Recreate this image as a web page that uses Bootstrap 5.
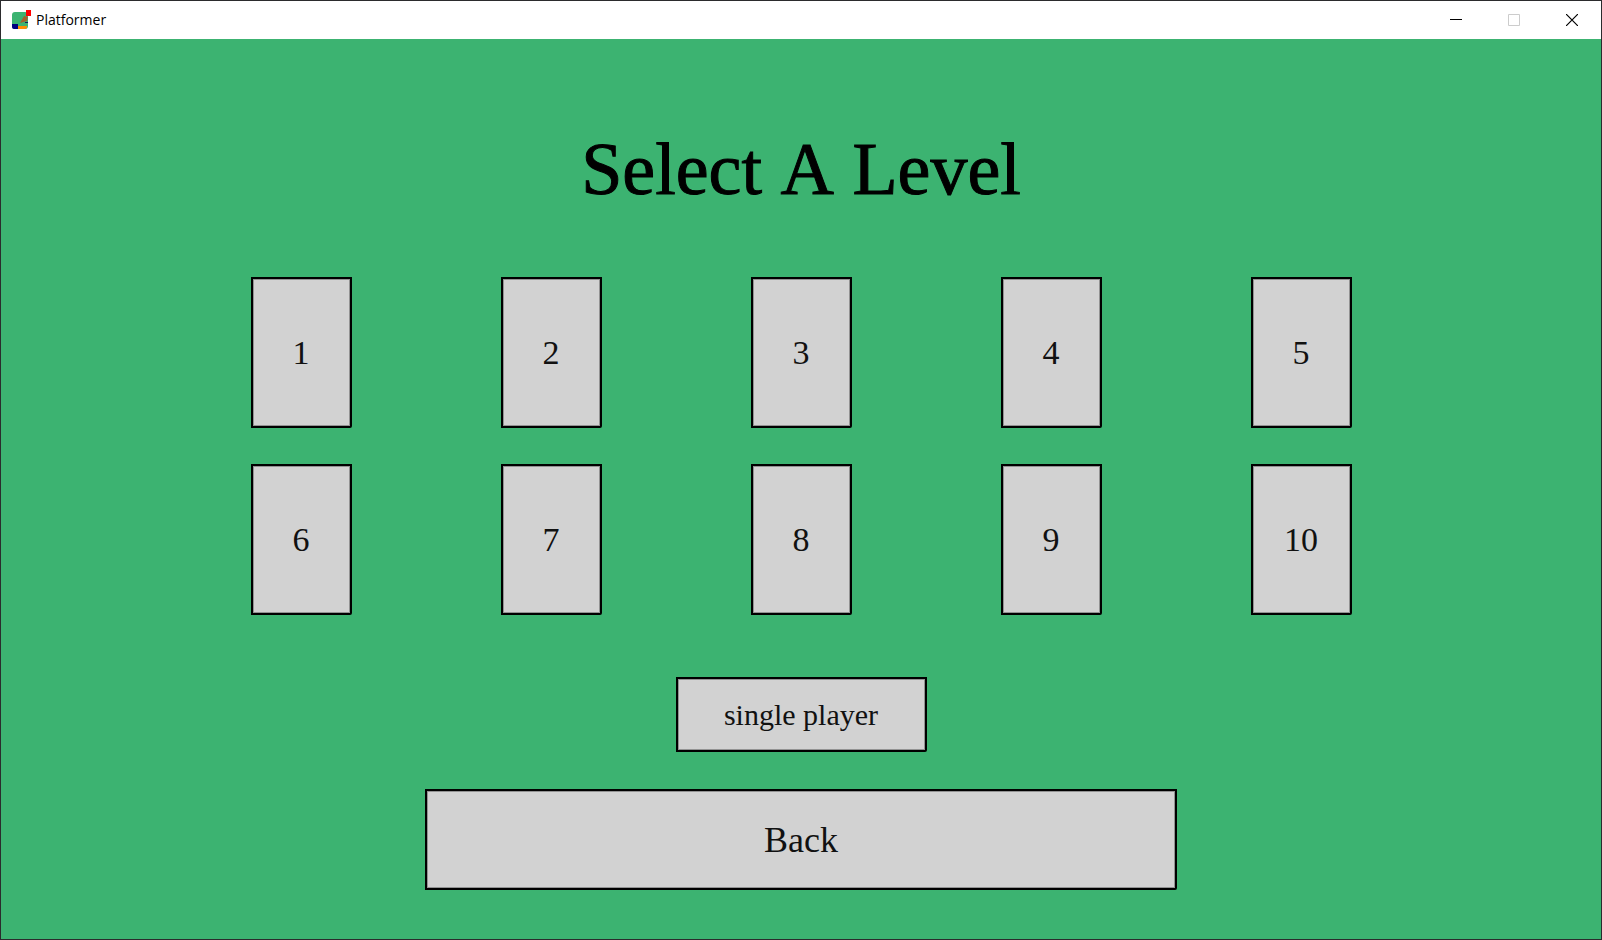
<!DOCTYPE html>
<html lang="en">
<head>
<meta charset="utf-8">
<meta name="viewport" content="width=device-width, initial-scale=1">
<title>Platformer</title>
<link href="https://cdn.jsdelivr.net/npm/bootstrap@5.3.0/dist/css/bootstrap.min.css" rel="stylesheet">
<style>
  .app-window { border: 1px solid #2b2b2d; background: #3cb371; }
  .title-bar { height: 38px; padding-left: 7px; font: 14px/20px "Open Sans", "Noto Sans", sans-serif; color: #000; }
  .caption-btn { width: 58px; height: 38px; border: 0; background: none; color: #000; }
  .caption-btn:hover { background: #e5e5e5; }
  .caption-btn:disabled { color: #ccc; }
  .game-screen { font-family: "Liberation Serif", serif; color: #000; padding: 84px 0 49px; }
  .screen-title { font-size: 74px; line-height: 92px; font-kerning: none; -webkit-text-stroke: 1px #000; }
  .level-grid { display: grid; grid-template-columns: repeat(5, 1fr); row-gap: 36px; width: 78.125%; margin-top: 62px; }
  .game-btn {
    padding: 0; border: 2px solid #000; border-bottom-right-radius: 2px;
    background: #d2d2d2; color: #111;
    box-shadow: inset 0 0 0 1px rgba(0, 0, 0, .3);
    font-size: 36px; line-height: 40px;
  }
  .game-btn:hover { background: #c4c4c4; }
  .level-btn { width: 101px; height: 151px; font-size: 34px; }
  .mode-btn { width: 251px; height: 75px; margin-top: 62px; font-size: 30px; }
  .back-btn { width: 47%; height: 101px; margin-top: 37px; }
</style>
</head>
<body>
<div class="app-window min-vh-100 d-flex flex-column">
  <header class="title-bar bg-white d-flex align-items-center">
    <svg class="me-1" width="24" height="24" viewBox="0 0 24 24" aria-hidden="true">
      <rect x="4" y="4" width="16" height="17" rx="3" fill="#3cb371"/>
      <path d="M12 15l4-7 4 1-1 4z" fill="#a0622d"/>
      <path d="M17 14.500h3" stroke="#102060"/>
      <path d="M10 18h9v1a2 2 0 0 1-2 2h-7z" fill="#ff8c00"/>
      <path d="M4 16h6v5H6a2 2 0 0 1-2-2z" fill="#000080"/>
      <rect x="18" y="2" width="5" height="6" fill="#f00"/>
    </svg>
    <span>Platformer</span>
    <div class="ms-auto d-flex">
      <button type="button" class="caption-btn" aria-label="Minimize"><svg class="d-block mx-auto" width="12" height="12" viewBox="0 0 12 12"><path d="M0 5.500h12" stroke="currentColor"/></svg></button>
      <button type="button" class="caption-btn" aria-label="Maximize" disabled><svg class="d-block mx-auto" width="12" height="12" viewBox="0 0 12 12"><path d="M.5.5h11v11H.5z" fill="none" stroke="currentColor"/></svg></button>
      <button type="button" class="caption-btn" aria-label="Close"><svg class="d-block mx-auto" width="12" height="12" viewBox="0 0 12 12"><path d="m0 0 12 12M12 0 0 12" stroke="currentColor" stroke-width="1.2"/></svg></button>
    </div>
  </header>
  <main class="game-screen flex-grow-1 d-flex flex-column align-items-center">
    <h1 class="screen-title fw-normal text-center mb-0">Select A Level</h1>
    <div class="level-grid">
      <div class="text-center"><button type="button" class="game-btn level-btn">1</button></div>
      <div class="text-center"><button type="button" class="game-btn level-btn">2</button></div>
      <div class="text-center"><button type="button" class="game-btn level-btn">3</button></div>
      <div class="text-center"><button type="button" class="game-btn level-btn">4</button></div>
      <div class="text-center"><button type="button" class="game-btn level-btn">5</button></div>
      <div class="text-center"><button type="button" class="game-btn level-btn">6</button></div>
      <div class="text-center"><button type="button" class="game-btn level-btn">7</button></div>
      <div class="text-center"><button type="button" class="game-btn level-btn">8</button></div>
      <div class="text-center"><button type="button" class="game-btn level-btn">9</button></div>
      <div class="text-center"><button type="button" class="game-btn level-btn">10</button></div>
    </div>
    <button type="button" class="game-btn mode-btn">single player</button>
    <button type="button" class="game-btn back-btn">Back</button>
  </main>
</div>
<script src="https://cdn.jsdelivr.net/npm/bootstrap@5.3.0/dist/js/bootstrap.bundle.min.js"></script>
</body>
</html>
